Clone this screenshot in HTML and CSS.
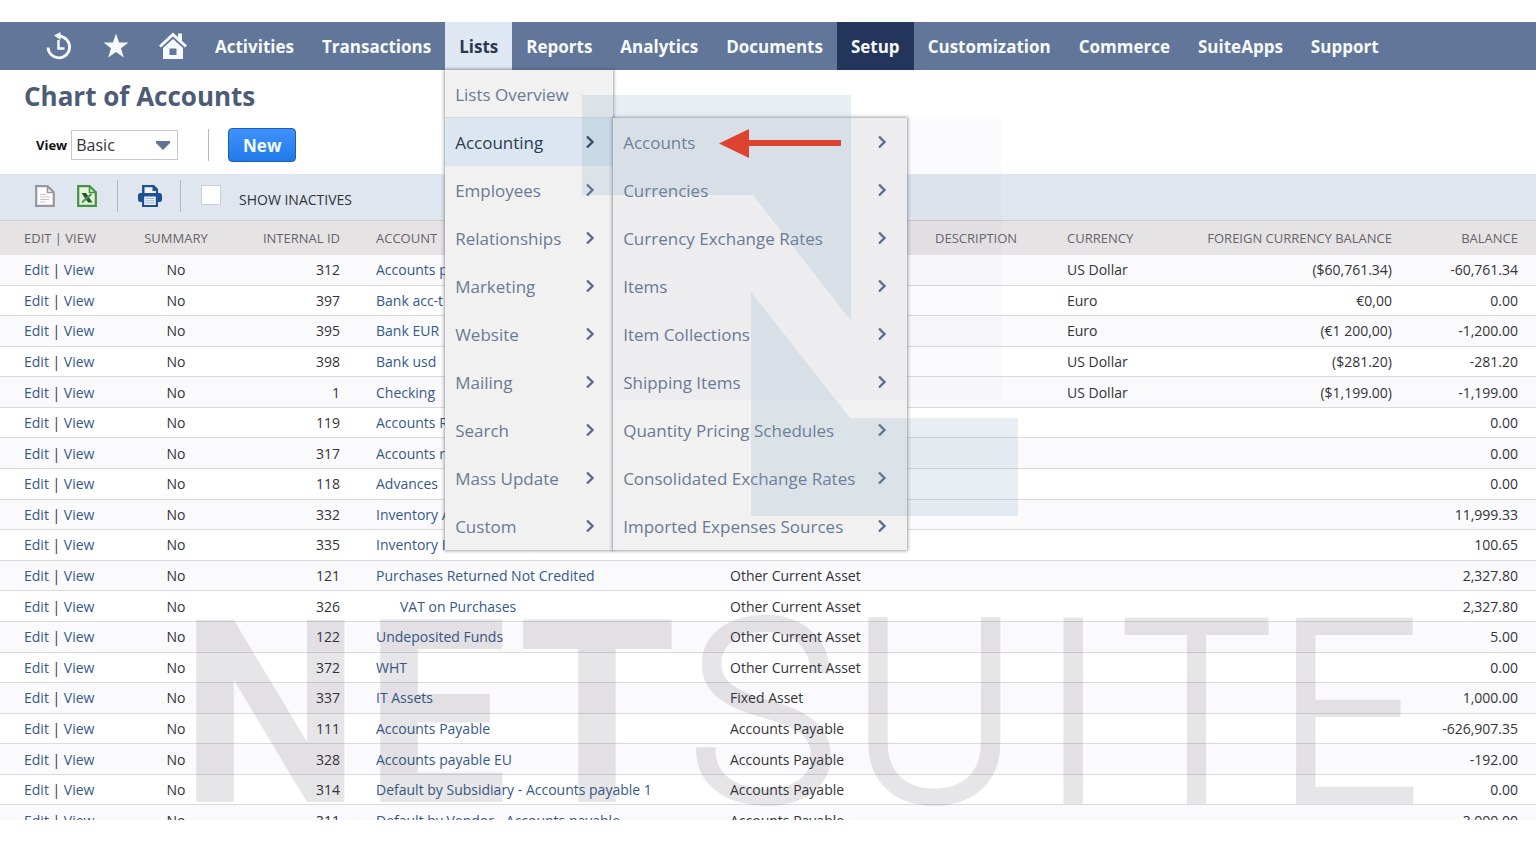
FILE: index.html
```html
<!DOCTYPE html>
<html lang="en">
<head>
<meta charset="utf-8">
<title>Chart of Accounts</title>
<link rel="stylesheet" href="styles.css">
</head>
<body>
<svg class="defs" aria-hidden="true">
  <symbol id="chev" viewBox="0 0 10 14"><path d="M2 1.500 7.500 7 2 12.500" fill="none" stroke="currentColor" stroke-width="2.400"/></symbol>
</svg>
<div class="app">
  <nav class="nav">
    <button class="nav-icon" aria-label="Recent records">
      <svg width="26" height="28" viewBox="0 0 26 28"><path d="M2 15.500A10.800 10.800 0 1 0 13.500 4.200" fill="none" stroke="currentColor" stroke-width="2.800"/><path d="M14.500 0v8L8 3.500z" fill="currentColor"/><path d="M12.500 8v8.500h6" fill="none" stroke="currentColor" stroke-width="2.400"/></svg>
    </button>
    <button class="nav-icon" aria-label="Shortcuts">
      <svg width="26" height="26" viewBox="0 0 26 26"><path d="M13 .5l3.100 9h9.400l-7.500 5.700 2.800 9.300-7.800-5.600-7.800 5.600L8 15.200.5 9.500h9.400z" fill="currentColor"/></svg>
    </button>
    <button class="nav-icon" aria-label="Home">
      <svg width="28" height="28" viewBox="0 0 28 28"><path d="M1 14.500 14 2.500l13 12" fill="none" stroke="currentColor" stroke-width="3"/><path d="M19 1.500h4v8l-4-3.500z" fill="currentColor"/><path fill-rule="evenodd" d="M4 16 14 7l10 9v11H4zm6.500.5v6.500h7v-6.500z" fill="currentColor"/></svg>
    </button>
    <ul class="tabs">
      <li><a href="#">Activities</a></li>
      <li><a href="#">Transactions</a></li>
      <li class="open"><a href="#">Lists</a>
        <ul class="menu">
          <li class="first"><a href="#">Lists Overview</a></li>
          <li class="active"><a href="#">Accounting<svg><use href="#chev"/></svg></a>
            <ul class="menu submenu">
              <li><a href="#">Accounts<svg><use href="#chev"/></svg></a></li>
              <li><a href="#">Currencies<svg><use href="#chev"/></svg></a></li>
              <li><a href="#">Currency Exchange Rates<svg><use href="#chev"/></svg></a></li>
              <li><a href="#">Items<svg><use href="#chev"/></svg></a></li>
              <li><a href="#">Item Collections<svg><use href="#chev"/></svg></a></li>
              <li><a href="#">Shipping Items<svg><use href="#chev"/></svg></a></li>
              <li><a href="#">Quantity Pricing Schedules<svg><use href="#chev"/></svg></a></li>
              <li><a href="#">Consolidated Exchange Rates<svg><use href="#chev"/></svg></a></li>
              <li><a href="#">Imported Expenses Sources<svg><use href="#chev"/></svg></a></li>
            </ul>
          </li>
          <li><a href="#">Employees<svg><use href="#chev"/></svg></a></li>
          <li><a href="#">Relationships<svg><use href="#chev"/></svg></a></li>
          <li><a href="#">Marketing<svg><use href="#chev"/></svg></a></li>
          <li><a href="#">Website<svg><use href="#chev"/></svg></a></li>
          <li><a href="#">Mailing<svg><use href="#chev"/></svg></a></li>
          <li><a href="#">Search<svg><use href="#chev"/></svg></a></li>
          <li><a href="#">Mass Update<svg><use href="#chev"/></svg></a></li>
          <li><a href="#">Custom<svg><use href="#chev"/></svg></a></li>
        </ul>
      </li>
      <li><a href="#">Reports</a></li>
      <li><a href="#">Analytics</a></li>
      <li><a href="#">Documents</a></li>
      <li class="current"><a href="#">Setup</a></li>
      <li><a href="#">Customization</a></li>
      <li><a href="#">Commerce</a></li>
      <li><a href="#">SuiteApps</a></li>
      <li><a href="#">Support</a></li>
    </ul>
  </nav>

  <header class="head">
    <h1>Chart of Accounts</h1>
    <div class="controls">
      <label for="view">View</label>
      <span class="select">
        <select id="view"><option>Basic</option></select>
        <svg width="14" height="9" viewBox="0 0 14 9"><path d="M0 0h14v2L7 9 0 2z" fill="#5f7397"/></svg>
      </span>
      <span class="rule"></span>
      <button class="new">New</button>
    </div>
  </header>

  <div class="toolbar">
    <button class="tool" aria-label="Export CSV">
      <svg width="20" height="22" viewBox="0 0 20 22"><path d="M1.200 1.200h11.300l6.300 6v13.600H1.200z" fill="#fcfcfd" stroke="#96989f" stroke-width="2.200"/><path d="M12.500 1.500v6H18.500" fill="none" stroke="#96989f" stroke-width="1.600"/><path d="M5 9.500h6M5 12h10M5 14.500h9M5 17h5" stroke="#c3c5cb" stroke-width="1.200"/></svg>
    </button>
    <button class="tool" aria-label="Export Excel">
      <svg width="20" height="22" viewBox="0 0 20 22"><path d="M1.200 1.200h11.300l6.300 6v13.600H1.200z" fill="#e6f6da" stroke="#449249" stroke-width="2.200"/><path d="M12.500 1.500v6H18.500" fill="none" stroke="#449249" stroke-width="1.600"/><path d="M4.500 8h4.500l6.500 9.500H11z" fill="#24572b"/><path d="M14.500 9 5 17.500" stroke="#4d9152" stroke-width="2"/></svg>
    </button>
    <span class="rule"></span>
    <button class="tool print" aria-label="Print">
      <svg width="24" height="22" viewBox="0 0 24 22"><path d="M4 10V0h12l4 4v6z" fill="#1f5096"/><path d="M6.500 10V2.200h8V6H18v4z" fill="#f2f6fc"/><rect y="8" width="24" height="9" rx="2.500" fill="#1f5096"/><path d="M4 12h16v10H4z" fill="#1f5096"/><path d="M6.200 11.500h11.600v8.500H6.200z" fill="#edf3fb"/><path d="M7.500 13.500h9M7.500 15.800h9M7.500 18h9" stroke="#9db4d6" stroke-width="1"/></svg>
    </button>
    <span class="rule"></span>
    <input type="checkbox" id="inactive">
    <label for="inactive">SHOW INACTIVES</label>
  </div>

  <table class="grid">
    <colgroup><col class="c1"><col class="c2"><col class="c3"><col class="c4"><col class="c5"><col class="c6"><col class="c7"><col class="c8"><col class="c9"></colgroup>
    <thead><tr><th>EDIT | VIEW</th><th class="mid">SUMMARY</th><th class="num">INTERNAL ID</th><th>ACCOUNT</th><th>TYPE</th><th>DESCRIPTION</th><th>CURRENCY</th><th class="num">FOREIGN CURRENCY BALANCE</th><th class="num">BALANCE</th></tr></thead>
    <tbody>
      <tr><td><a href="#">Edit</a> | <a href="#">View</a></td><td class="mid">No</td><td class="num">312</td><td><a href="#">Accounts p</a></td><td></td><td></td><td>US Dollar</td><td class="num">($60,761.34)</td><td class="num">-60,761.34</td></tr>
      <tr><td><a href="#">Edit</a> | <a href="#">View</a></td><td class="mid">No</td><td class="num">397</td><td><a href="#">Bank acc-t</a></td><td></td><td></td><td>Euro</td><td class="num">€0,00</td><td class="num">0.00</td></tr>
      <tr><td><a href="#">Edit</a> | <a href="#">View</a></td><td class="mid">No</td><td class="num">395</td><td><a href="#">Bank EUR</a></td><td></td><td></td><td>Euro</td><td class="num">(€1 200,00)</td><td class="num">-1,200.00</td></tr>
      <tr><td><a href="#">Edit</a> | <a href="#">View</a></td><td class="mid">No</td><td class="num">398</td><td><a href="#">Bank usd</a></td><td></td><td></td><td>US Dollar</td><td class="num">($281.20)</td><td class="num">-281.20</td></tr>
      <tr><td><a href="#">Edit</a> | <a href="#">View</a></td><td class="mid">No</td><td class="num">1</td><td><a href="#">Checking</a></td><td></td><td></td><td>US Dollar</td><td class="num">($1,199.00)</td><td class="num">-1,199.00</td></tr>
      <tr><td><a href="#">Edit</a> | <a href="#">View</a></td><td class="mid">No</td><td class="num">119</td><td><a href="#">Accounts R</a></td><td></td><td></td><td></td><td></td><td class="num">0.00</td></tr>
      <tr><td><a href="#">Edit</a> | <a href="#">View</a></td><td class="mid">No</td><td class="num">317</td><td><a href="#">Accounts r</a></td><td></td><td></td><td></td><td></td><td class="num">0.00</td></tr>
      <tr><td><a href="#">Edit</a> | <a href="#">View</a></td><td class="mid">No</td><td class="num">118</td><td><a href="#">Advances</a></td><td></td><td></td><td></td><td></td><td class="num">0.00</td></tr>
      <tr><td><a href="#">Edit</a> | <a href="#">View</a></td><td class="mid">No</td><td class="num">332</td><td><a href="#">Inventory A</a></td><td></td><td></td><td></td><td></td><td class="num">11,999.33</td></tr>
      <tr><td><a href="#">Edit</a> | <a href="#">View</a></td><td class="mid">No</td><td class="num">335</td><td><a href="#">Inventory In Transit</a></td><td>Other Current Asset</td><td></td><td></td><td></td><td class="num">100.65</td></tr>
      <tr><td><a href="#">Edit</a> | <a href="#">View</a></td><td class="mid">No</td><td class="num">121</td><td><a href="#">Purchases Returned Not Credited</a></td><td>Other Current Asset</td><td></td><td></td><td></td><td class="num">2,327.80</td></tr>
      <tr><td><a href="#">Edit</a> | <a href="#">View</a></td><td class="mid">No</td><td class="num">326</td><td class="child"><a href="#">VAT on Purchases</a></td><td>Other Current Asset</td><td></td><td></td><td></td><td class="num">2,327.80</td></tr>
      <tr><td><a href="#">Edit</a> | <a href="#">View</a></td><td class="mid">No</td><td class="num">122</td><td><a href="#">Undeposited Funds</a></td><td>Other Current Asset</td><td></td><td></td><td></td><td class="num">5.00</td></tr>
      <tr><td><a href="#">Edit</a> | <a href="#">View</a></td><td class="mid">No</td><td class="num">372</td><td><a href="#">WHT</a></td><td>Other Current Asset</td><td></td><td></td><td></td><td class="num">0.00</td></tr>
      <tr><td><a href="#">Edit</a> | <a href="#">View</a></td><td class="mid">No</td><td class="num">337</td><td><a href="#">IT Assets</a></td><td>Fixed Asset</td><td></td><td></td><td></td><td class="num">1,000.00</td></tr>
      <tr><td><a href="#">Edit</a> | <a href="#">View</a></td><td class="mid">No</td><td class="num">111</td><td><a href="#">Accounts Payable</a></td><td>Accounts Payable</td><td></td><td></td><td></td><td class="num">-626,907.35</td></tr>
      <tr><td><a href="#">Edit</a> | <a href="#">View</a></td><td class="mid">No</td><td class="num">328</td><td><a href="#">Accounts payable EU</a></td><td>Accounts Payable</td><td></td><td></td><td></td><td class="num">-192.00</td></tr>
      <tr><td><a href="#">Edit</a> | <a href="#">View</a></td><td class="mid">No</td><td class="num">314</td><td><a href="#">Default by Subsidiary - Accounts payable 1</a></td><td>Accounts Payable</td><td></td><td></td><td></td><td class="num">0.00</td></tr>
      <tr><td><a href="#">Edit</a> | <a href="#">View</a></td><td class="mid">No</td><td class="num">311</td><td><a href="#">Default by Vendor - Accounts payable</a></td><td>Accounts Payable</td><td></td><td></td><td></td><td class="num">3,000.00</td></tr>
    </tbody>
  </table>

  <svg class="overlay" viewBox="0 22 1536 798" preserveAspectRatio="xMinYMin meet">
    <path class="mark-faint" d="M613 118h388v282H613z"/>
    <path class="mark" d="M582 95H851V321L753 195H582zM751 292 850 418H1018V516H751z"/>
    <g class="wordmark">
      <text class="heavy" x="180 364 518" y="802">NET</text>
      <text class="light" x="687 850 1039 1120 1275" y="802">SUITE</text>
    </g>
    <path class="pointer" d="M719 143.500 749 129v11h92v6h-92v12z"/>
  </svg>
</div>
</body>
</html>
```

FILE: styles.css
```css
* { box-sizing: border-box; }
body {
  margin: 0;
  background: #fff;
  color: #333338;
  font-family: "Open Sans", "Noto Sans", sans-serif;
  font-size: 14px;
}
a { color: inherit; text-decoration: none; }
ul { list-style: none; margin: 0; padding: 0; }
button { font: inherit; border: 0; background: none; padding: 0; color: inherit; }
.defs { position: absolute; width: 0; height: 0; }

.app {
  position: relative;
  height: calc(100vh - 66px);
  min-height: 500px;
  margin: 22px 0 44px;
  overflow: hidden;
}

/* Navigation bar */
.nav {
  display: flex;
  height: 48px;
  padding-left: 30px;
  background: #627699;
  color: #f7fafd;
}
.nav-icon { display: grid; place-items: center; width: 57px; }
.tabs { display: flex; }
.tabs > li { position: relative; }
.tabs > li > a {
  display: flex;
  align-items: center;
  height: 48px;
  padding: 0 14px;
  font-size: 17px;
  font-weight: 700;
}
.tabs > .open > a { background: #dfe7f2; color: #2a3852; }
.tabs > .current > a { background: #23355a; }

/* Drop-down menus */
.menu {
  position: absolute;
  top: 100%;
  left: 0;
  z-index: 2;
  width: 168px;
  background: #f1f1f2;
  color: #6b7a92;
  font-size: 17px;
  box-shadow: 0 0 3px 1px rgba(70, 72, 82, .5);
}
.menu a {
  display: flex;
  align-items: center;
  justify-content: space-between;
  height: 48px;
  padding: 0 18px 0 10px;
  white-space: nowrap;
}
.menu svg { width: 10px; height: 14px; color: #5c6d8c; }
.menu .first { border-bottom: 1px solid #d5d8dc; height: 48px; }
.menu .active { position: relative; }
.menu .active > a { background: #dbe6f0; color: #2c3b52; }
.menu .active > a svg { color: #2c3b52; }
.menu .submenu { top: 0; left: 100%; width: 294px; }
.menu .submenu a { padding-right: 20px; }

/* Page heading */
.head { padding: 8px 24px 12px; }
h1 { margin: 0; font-size: 26px; line-height: 36px; color: #4d5b77; }
.controls { display: flex; align-items: center; margin: 14px 0 0 12px; height: 34px; }
.controls label { color: #111; font-size: 13px; font-weight: 700; margin-right: 4px; }
.select { position: relative; width: 107px; }
.select select {
  appearance: none;
  width: 100%;
  height: 30px;
  padding: 0 4px;
  border: 1px solid #c6c8cc;
  border-radius: 0;
  background: #fff;
  color: #333338;
  font: inherit;
  font-size: 16px;
}
.select svg { position: absolute; right: 8px; top: 11px; pointer-events: none; }
.rule { width: 1px; height: 32px; background: #b4b8c2; }
.controls .rule { margin: 0 19px 0 30px; }
.new {
  width: 68px;
  height: 34px;
  border: 1px solid #1f5cb4;
  border-radius: 4px;
  background: linear-gradient(#3f92fb, #2179ea);
  color: #f5faff;
  font-size: 17px;
  font-weight: 700;
}

/* Toolbar */
.toolbar {
  display: flex;
  align-items: center;
  height: 47px;
  padding: 0 35px 2px;
  background: #e0e6ef;
  border-bottom: 1px solid #cbcccf;
}
.tool { display: flex; margin-right: 22px; }
.toolbar .rule { margin-right: 20px; }
.toolbar .tool:nth-child(2) { margin-right: 20px; }
.toolbar .print { margin-right: 18px; }
.toolbar input {
  appearance: none;
  width: 20px;
  height: 20px;
  margin: 0 18px 2px 0;
  border: 1px solid #ccced2;
  background: #fff;
}
.toolbar label { padding-top: 6px; }

/* Accounts list */
.grid { width: 100%; height: 615px; table-layout: fixed; border-collapse: separate; border-spacing: 0; }
.c1 { width: 120px; } .c2 { width: 112px; } .c3 { width: 126px; }
.c4 { width: 354px; } .c5 { width: 205px; } .c6 { width: 132px; }
.c7 { width: 121px; } .c8 { width: 240px; } .c9 { width: 126px; }
.grid th {
  height: 34px;
  padding: 0 18px;
  background: #e5e3e4;
  color: #65656b;
  font-size: 13px;
  font-weight: 400;
  text-align: left;
  white-space: nowrap;
}
.grid td { padding: 0 18px; border-bottom: 1px solid #dadadd; white-space: nowrap; }
.grid th:first-child, .grid td:first-child { padding: 0 0 0 24px; }
.grid a { color: #36598a; }
.grid tbody tr:nth-child(odd) { background: #fafafc; }
.grid .num { text-align: right; }
.grid .mid { text-align: center; }
.grid .child { padding-left: 42px; }

/* Brand watermark and callout */
.overlay { position: absolute; top: 0; left: 0; width: 100%; z-index: 3; pointer-events: none; }
.mark { fill: rgba(120, 160, 190, .18); }
.mark-faint { fill: rgba(120, 140, 180, .03); }
.wordmark { fill: #463c4b; opacity: .13; font-family: Roboto, sans-serif; font-size: 256px; }
.wordmark .heavy { font-weight: 700; }
.wordmark .light { font-weight: 300; stroke: #463c4b; stroke-width: 4px; }
.pointer { fill: #de4230; }
```
